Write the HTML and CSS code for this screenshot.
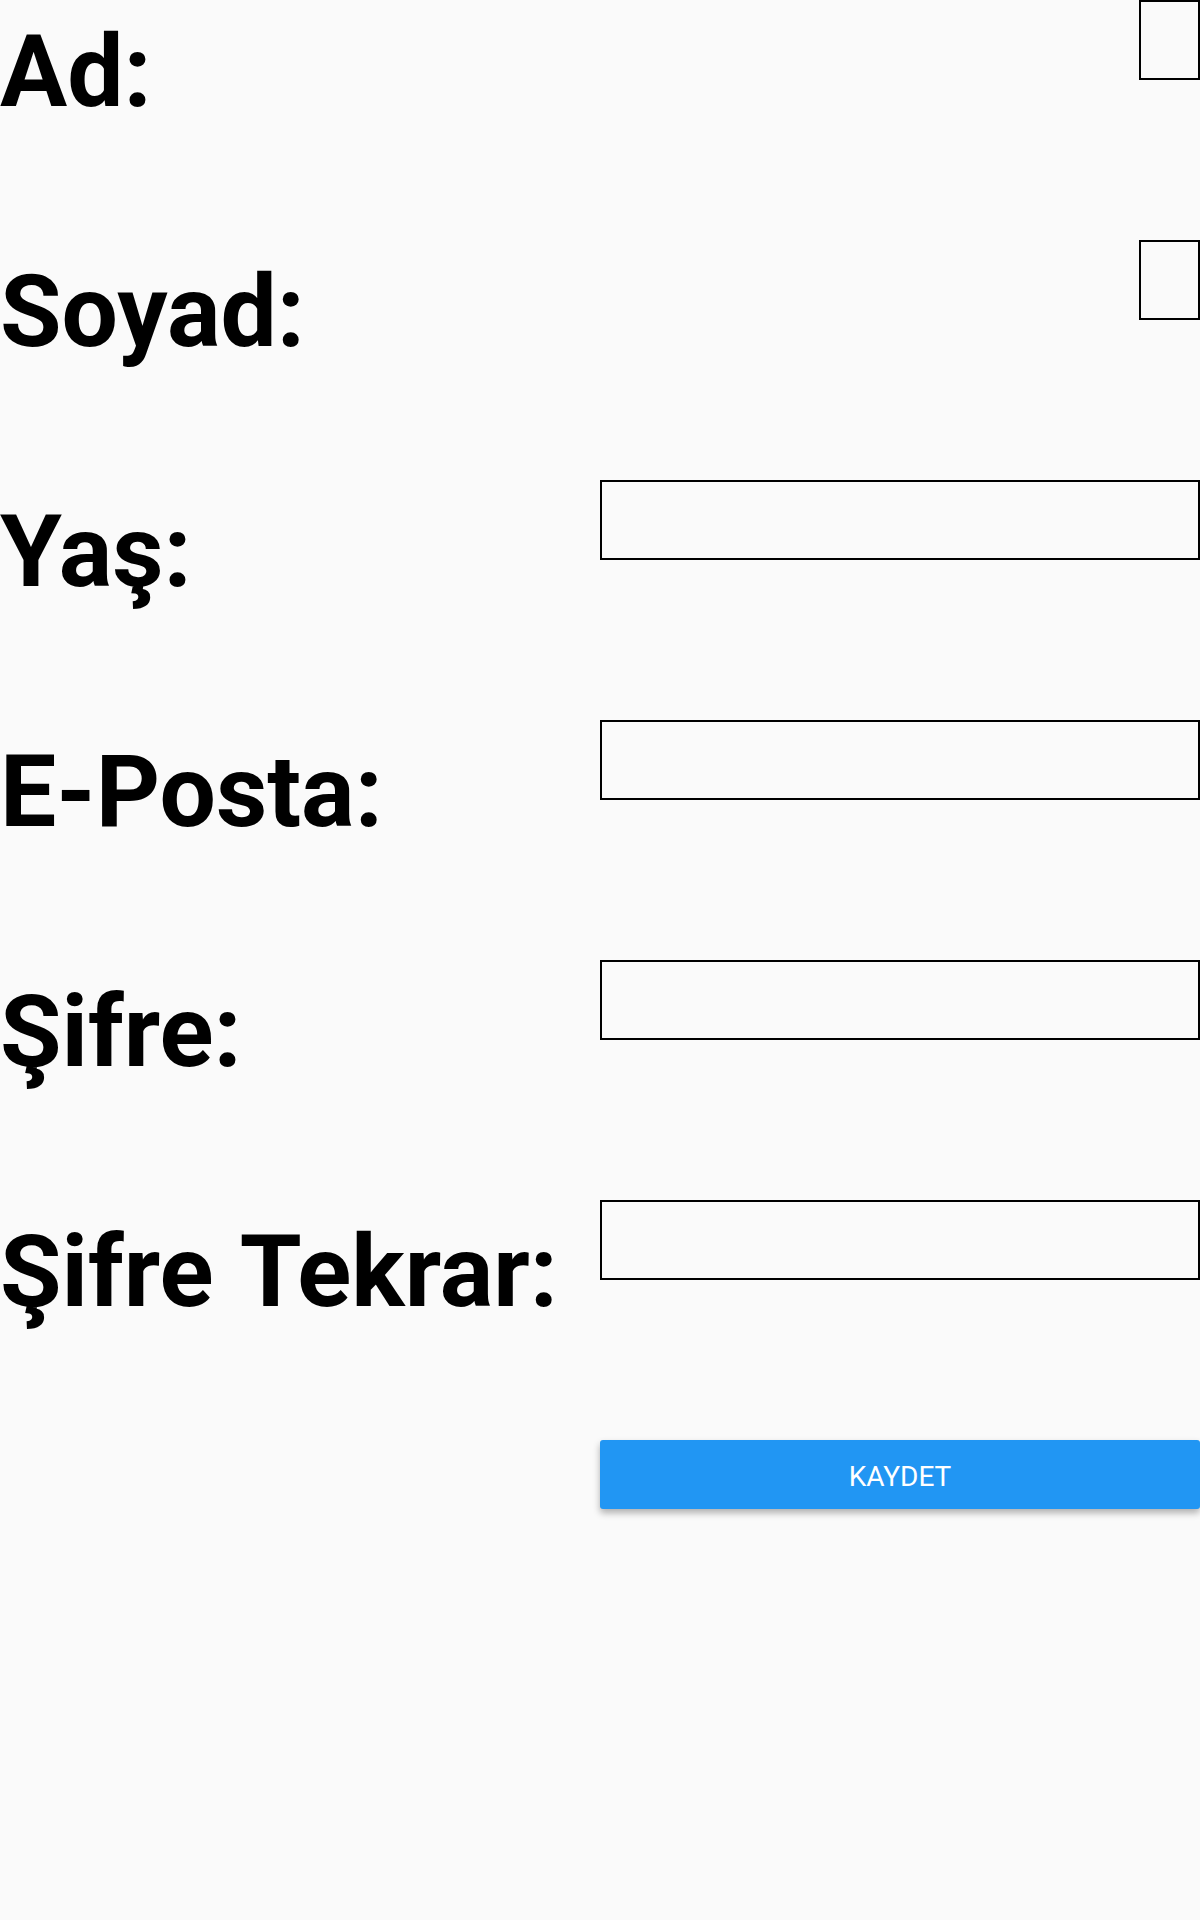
FILE: index.html
```html
<!DOCTYPE html>
<html lang="tr">
<head>
<meta charset="utf-8">
<title>Kayıt</title>
<link rel="stylesheet" href="styles.css">
</head>
<body>
<form class="form">
  <div class="row">
    <label class="label">Ad:</label>
    <div class="field field-end"><input class="input input-small" type="text"></div>
  </div>
  <div class="row">
    <label class="label">Soyad:</label>
    <div class="field field-end"><input class="input input-small" type="text"></div>
  </div>
  <div class="row">
    <label class="label">Yaş:</label>
    <div class="field"><input class="input" type="text"></div>
  </div>
  <div class="row">
    <label class="label">E-Posta:</label>
    <div class="field"><input class="input" type="text"></div>
  </div>
  <div class="row">
    <label class="label">Şifre:</label>
    <div class="field"><input class="input" type="password"></div>
  </div>
  <div class="row">
    <label class="label">Şifre Tekrar:</label>
    <div class="field"><input class="input" type="password"></div>
  </div>
  <div class="row">
    <div class="label"></div>
    <div class="field"><button class="button" type="button">KAYDET</button></div>
  </div>
</form>
</body>
</html>
```
FILE: styles.css
```css
html, body {
  margin: 0;
  padding: 0;
  background: #fafafa;
}
body {
  width: 1200px;
  min-height: 1920px;
  font-family: Roboto, "Liberation Sans", sans-serif;
  color: #000;
}
.form {
  display: flex;
  flex-direction: column;
}
.row {
  display: flex;
  height: 240px;
}
.label {
  width: 600px;
  flex: none;
  font-size: 100px;
  font-weight: 700;
  line-height: normal;
  padding-top: 13px;
  box-sizing: border-box;
  white-space: nowrap;
  word-spacing: 4px;
}
.field {
  width: 600px;
  flex: none;
  display: flex;
  align-items: flex-start;
}
.field-end {
  justify-content: flex-end;
}
.input {
  width: 600px;
  height: 80px;
  box-sizing: border-box;
  border: 2px solid #000;
  background: transparent;
  margin: 0;
  padding: 0 8px;
  outline: none;
}
.input-small {
  width: 61px;
}
.button {
  width: 600px;
  height: 69px;
  margin: 0;
  padding: 4px 0 0;
  border: none;
  border-radius: 3px;
  background: #2196f3;
  color: #fff;
  font-family: Roboto, "Liberation Sans", sans-serif;
  font-size: 28px;
  font-weight: 400;
  box-shadow: 0 4px 7px rgba(0, 0, 0, 0.3);
  cursor: pointer;
}
```
